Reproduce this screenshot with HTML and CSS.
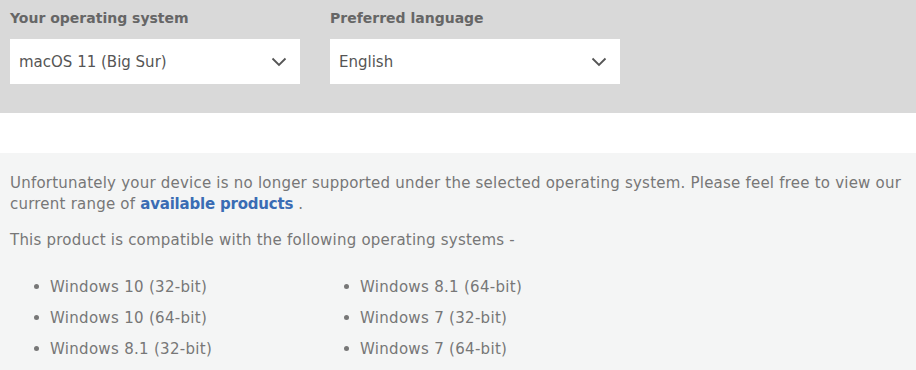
FILE: index.html
```html
<!DOCTYPE html>
<html lang="en">
<head>
    <meta charset="UTF-8">
    <title>Product support</title>
    <link rel="stylesheet" href="styles.css">
</head>
<body>
    <div class="filter-bar">
        <label class="filter-fld">
            <span class="filter-lbl">Your operating system</span>
            <span class="filter-sel">
                <span>macOS 11 (Big Sur)</span>
                <svg class="chev" width="16" height="10" viewBox="0 0 16 10"><path d="M1.5 1.5 L8 8 L14.5 1.5" fill="none" stroke="#555" stroke-width="1.8"/></svg>
            </span>
        </label>
        <label class="filter-fld">
            <span class="filter-lbl">Preferred language</span>
            <span class="filter-sel">
                <span>English</span>
                <svg class="chev" width="16" height="10" viewBox="0 0 16 10"><path d="M1.5 1.5 L8 8 L14.5 1.5" fill="none" stroke="#555" stroke-width="1.8"/></svg>
            </span>
        </label>
    </div>
    <div class="spacer"></div>
    <div class="notice">
        <p class="notice-txt">Unfortunately your device is no longer supported under the selected operating system. Please feel free to view our current range of <a href="#">available products</a> .</p>
        <p class="notice-txt">This product is compatible with the following operating systems -</p>
        <ul class="os-list">
            <li>Windows 10 (32-bit)</li>
            <li>Windows 10 (64-bit)</li>
            <li>Windows 8.1 (32-bit)</li>
            <li>Windows 8.1 (64-bit)</li>
            <li>Windows 7 (32-bit)</li>
            <li>Windows 7 (64-bit)</li>
        </ul>
    </div>
</body>
</html>
```

FILE: styles.css
```css
*, *:before, *:after {
    margin: 0;
    padding: 0;
    box-sizing: border-box;
}
body {
    background: #f4f5f5;
    font-family: 'DejaVu Sans', sans-serif;
    color: #777;
    overflow: hidden;
}
.filter-bar {
    display: flex;
    gap: 30px;
    height: 113px;
    padding: 10px 10px 0;
    background: #d9d9d9;
}
.filter-fld {
    display: flex;
    flex-direction: column;
    width: 290px;
}
.filter-lbl {
    height: 29px;
    font-size: 14px;
    font-weight: bold;
    color: #666;
}
.filter-sel {
    display: flex;
    align-items: center;
    justify-content: space-between;
    height: 45px;
    padding: 0 13px 0 9px;
    background: white;
    font-size: 15px;
    color: #555;
}
.spacer {
    height: 40px;
    background: white;
}
.notice {
    padding: 20px 0 0 10px;
}
.notice-txt {
    font-size: 15px;
    letter-spacing: 0.22px;
    line-height: 21px;
    margin-bottom: 15px;
}
.notice-txt a {
    color: #3a6cb4;
    font-weight: bold;
    letter-spacing: -0.2px;
    text-decoration: none;
}
.os-list {
    display: grid;
    grid-template-rows: repeat(3, 31px);
    grid-auto-flow: column;
    grid-template-columns: 310px 310px;
    padding: 5px 0 0 24px;
    list-style: none;
}
.os-list li {
    display: flex;
    align-items: center;
    gap: 11px;
    font-size: 15px;
    letter-spacing: 0.3px;
}
.os-list li:before {
    content: '';
    width: 5px;
    height: 5px;
    border-radius: 50%;
    background: #777;
}
```
